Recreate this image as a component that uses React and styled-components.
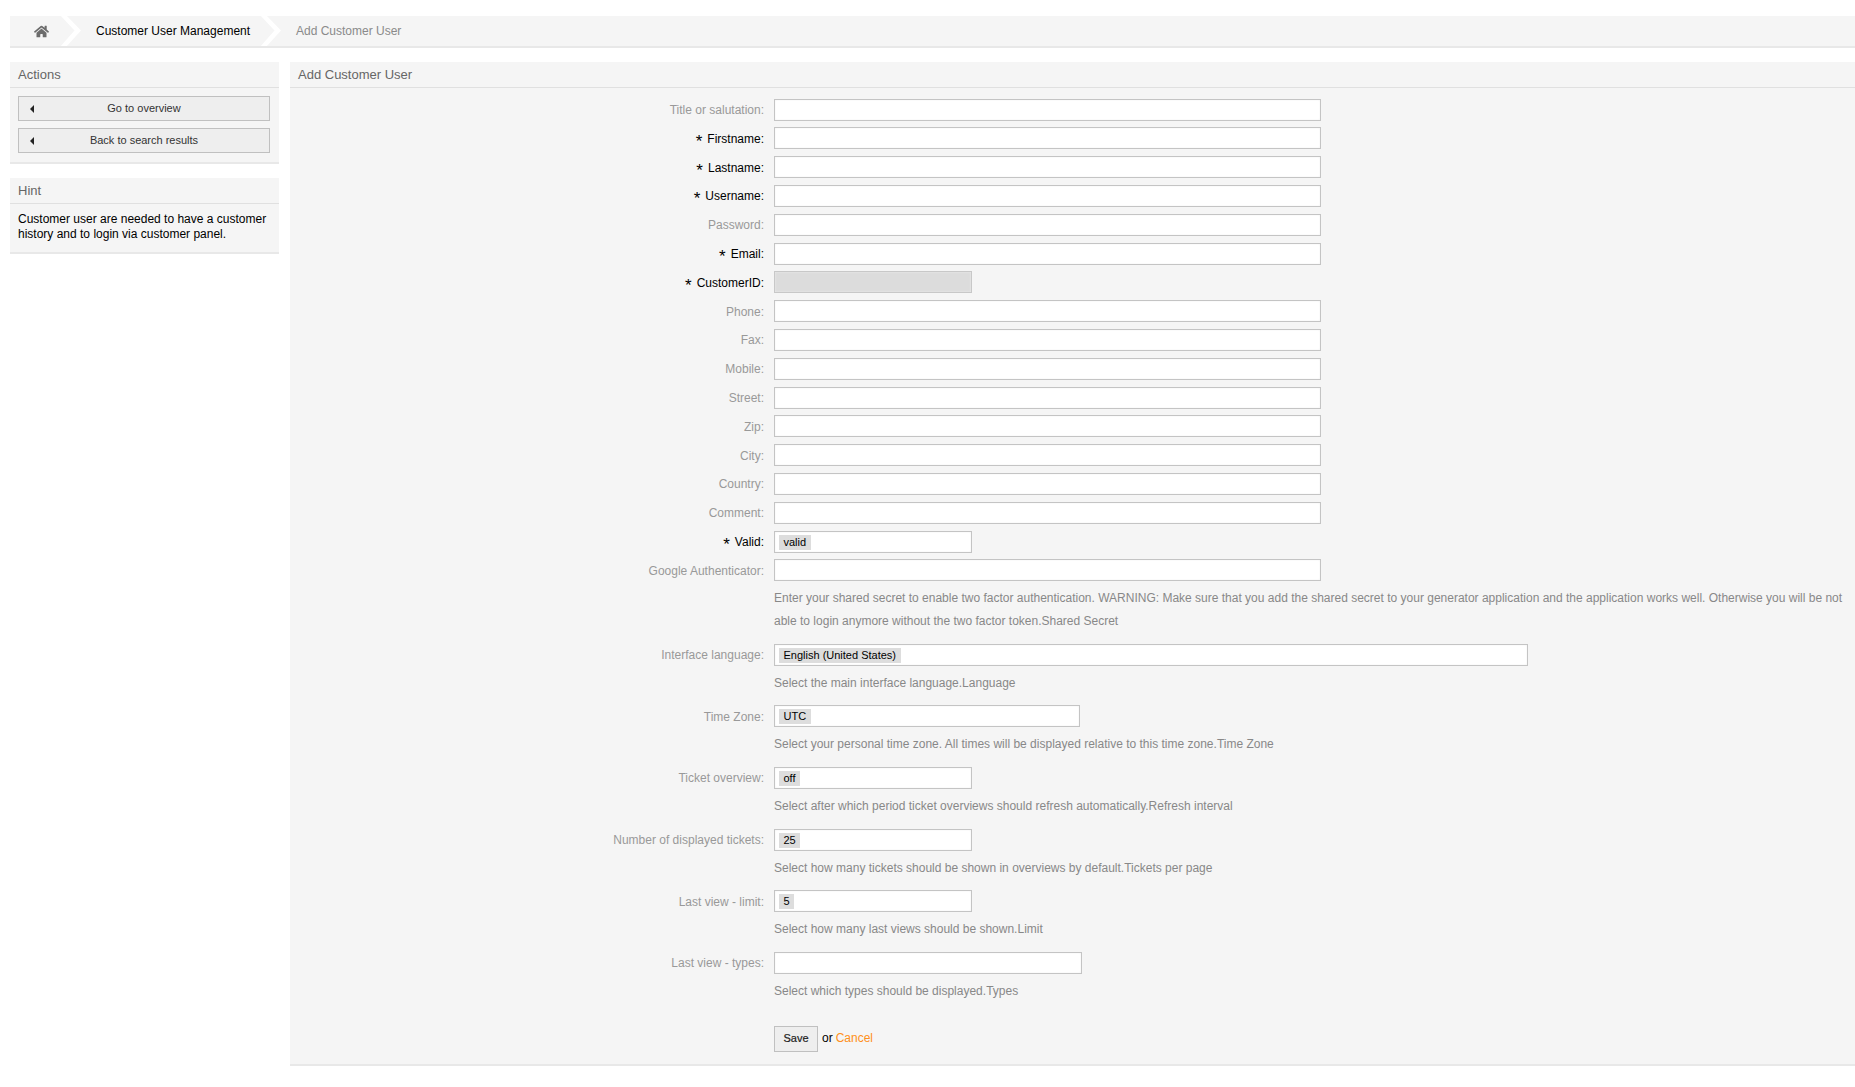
import React from "react";
import styled, { createGlobalStyle } from "styled-components";
import { FaHome } from "react-icons/fa";

const Global = createGlobalStyle`
  html, body { margin: 0; padding: 0; background: #fff; }
  body { font: 12px/15px "Liberation Sans", Arial, sans-serif; color: #000; }
  * { box-sizing: border-box; }
`;

const Page = styled.div`
  padding: 16px 0 21px 10px;
  width: 1855px;
`;

const Breadcrumb = styled.nav`
  display: flex;
  align-items: center;
  height: 32px;
  background: #f5f5f5;
  border-bottom: 2px solid #e8e8e8;
  margin-bottom: 14px;
  overflow: hidden;
`;

const Crumb = styled.span`
  display: flex;
  align-items: center;
  height: 30px;
  width: ${(p) => p.$width}px;
  padding-left: ${(p) => p.$pad}px;
  color: ${(p) => (p.$muted ? "#8a8a8a" : "#000")};
  white-space: nowrap;
  svg { color: #6c6c6c; }
`;

const Chevron = styled.svg`
  flex: none;
  display: block;
  width: 22px;
  height: 32px;
`;

const Columns = styled.div`
  display: flex;
  gap: 11px;
  align-items: flex-start;
`;

const Sidebar = styled.aside`
  flex: none;
  width: 269px;
  display: flex;
  flex-direction: column;
  gap: 14px;
`;

const Panel = styled.section`
  background: #f5f5f5;
  border-bottom: 2px solid #e8e8e8;
  flex: ${(p) => (p.$grow ? "1" : "none")};
  min-width: 0;
`;

const PanelHeader = styled.h2`
  margin: 0;
  height: 26px;
  padding-left: 8px;
  font-size: 13px;
  font-weight: normal;
  line-height: 26px;
  color: #666;
  border-bottom: 1px solid #e0e0e0;
`;

const ActionList = styled.div`
  display: flex;
  flex-direction: column;
  gap: 7px;
  padding: 8px 9px 9px 8px;
`;

const ActionButton = styled.a`
  position: relative;
  display: block;
  height: 25px;
  background: #eee;
  border: 1px solid #c0c0c0;
  color: #333;
  font-size: 11px;
  line-height: 23px;
  text-align: center;
`;

const BackArrow = styled.i`
  position: absolute;
  left: 11px;
  top: 8px;
  width: 0;
  height: 0;
  border-style: solid;
  border-width: 4px 4.5px 4px 0;
  border-color: transparent #222 transparent transparent;
`;

const HintText = styled.p`
  margin: 0;
  padding: 8px 8px 10px;
  line-height: 15px;
`;

const Form = styled.div`
  padding: 10.6px 0 12px;
`;

const Row = styled.div`
  display: grid;
  grid-template-columns: 474px 1fr;
  column-gap: 10px;
  margin-bottom: ${(p) => p.$gap ?? 6.8}px;
`;

const Label = styled.label`
  height: 22px;
  text-align: right;
  padding-top: 0.5px;
  line-height: 22px;
  color: ${(p) => (p.$required ? "#000" : "#999")};
`;

const Star = styled.span`
  font-size: 17px;
  line-height: 0;
  vertical-align: -4px;
  margin-right: 5px;
`;

const FieldCol = styled.div`
  min-width: 0;
`;

const Input = styled.input`
  display: block;
  width: ${(p) => p.$width || 547}px;
  height: 22px;
  padding: 0 4px;
  background: #fff;
  border: 1px solid #c4c4c4;
  border-radius: 0;
  box-shadow: inset 0 0 2px #eee;
  outline: none;
`;

const DisabledField = styled.div`
  width: 198px;
  height: 22px;
  background: #dcdcdc;
  border: 1px solid #c8c8c8;
  box-shadow: inset 0 0 2px #eee;
`;

const SelectField = styled.div`
  display: flex;
  align-items: flex-start;
  width: ${(p) => p.$width}px;
  height: 22px;
  padding: 3px 0 0 4px;
  background: #fff;
  border: 1px solid #c4c4c4;
  box-shadow: inset 0 0 2px #eee;
`;

const Chip = styled.span`
  height: 15px;
  padding: 0 4.5px;
  background: #ddd;
  font-size: 11px;
  line-height: 15px;
`;

const Help = styled.p`
  margin: 6px 0 0;
  line-height: 23px;
  color: #888;
`;

const ActionsRow = styled.div`
  display: flex;
  align-items: center;
  gap: 4px;
  margin: 23px 0 0 484px;
`;

const SaveButton = styled.button`
  width: 44px;
  height: 26px;
  padding: 0 0 2px;
  background: #eee;
  border: 1px solid #c0c0c0;
  border-radius: 0;
  color: #222;
  font: 11px "Liberation Sans", Arial, sans-serif;
  -webkit-text-stroke: 0.2px #222;
`;

const OrText = styled.span`
  margin-bottom: 1px;
  a { color: #ff9020; margin-left: 3px; }
`;

const topRows = [
  ["Title or salutation:"],
  ["Firstname:", true],
  ["Lastname:", true],
  ["Username:", true],
  ["Password:"],
  ["Email:", true],
  ["CustomerID:", true, "disabled"],
  ["Phone:"],
  ["Fax:"],
  ["Mobile:"],
  ["Street:"],
  ["Zip:"],
  ["City:"],
  ["Country:"],
  ["Comment:"],
];

const helpRows = [
  { label: "Interface language:", chip: "English (United States)", width: 754, help: "Select the main interface language.Language" },
  { label: "Time Zone:", chip: "UTC", width: 306, help: "Select your personal time zone. All times will be displayed relative to this time zone.Time Zone" },
  { label: "Ticket overview:", chip: "off", width: 198, help: "Select after which period ticket overviews should refresh automatically.Refresh interval" },
  { label: "Number of displayed tickets:", chip: "25", width: 198, help: "Select how many tickets should be shown in overviews by default.Tickets per page" },
  { label: "Last view - limit:", chip: "5", width: 198, help: "Select how many last views should be shown.Limit" },
  { label: "Last view - types:", width: 308, help: "Select which types should be displayed.Types" },
];

const RowLabel = ({ required, children }) => (
  <Label $required={required}>
    {required && <Star>*</Star>}
    {children}
  </Label>
);

const ChevronMark = () => (
  <Chevron viewBox="0 0 22 32" aria-hidden="true">
    <path d="M0 0 L6 0 L21 15.5 L6 32 L0 32 L14.5 15.5 Z" fill="#fff" />
  </Chevron>
);

export default function App() {
  return (
    <>
      <Global />
      <Page>
        <Breadcrumb>
          <Crumb $width={50} $pad={24}>
            <FaHome size={15} />
          </Crumb>
          <ChevronMark />
          <Crumb $width={178} $pad={14}>Customer User Management</Crumb>
          <ChevronMark />
          <Crumb $pad={14} $muted>Add Customer User</Crumb>
        </Breadcrumb>
        <Columns>
          <Sidebar>
            <Panel>
              <PanelHeader>Actions</PanelHeader>
              <ActionList>
                <ActionButton><BackArrow />Go to overview</ActionButton>
                <ActionButton><BackArrow />Back to search results</ActionButton>
              </ActionList>
            </Panel>
            <Panel>
              <PanelHeader>Hint</PanelHeader>
              <HintText>Customer user are needed to have a customer history and to login via customer panel.</HintText>
            </Panel>
          </Sidebar>
          <Panel $grow>
            <PanelHeader>Add Customer User</PanelHeader>
            <Form>
              {topRows.map(([label, required, kind]) => (
                <Row key={label}>
                  <RowLabel required={required}>{label}</RowLabel>
                  <FieldCol>{kind === "disabled" ? <DisabledField /> : <Input type="text" />}</FieldCol>
                </Row>
              ))}
              <Row>
                <RowLabel required>Valid:</RowLabel>
                <FieldCol><SelectField $width={198}><Chip>valid</Chip></SelectField></FieldCol>
              </Row>
              <Row $gap={10.4}>
                <RowLabel>Google Authenticator:</RowLabel>
                <FieldCol>
                  <Input type="text" />
                  <Help>Enter your shared secret to enable two factor authentication. WARNING: Make sure that you add the shared secret to your generator application and the application works well. Otherwise you will be not able to login anymore without the two factor token.Shared Secret</Help>
                </FieldCol>
              </Row>
              {helpRows.map((r) => (
                <Row $gap={10.6} key={r.label}>
                  <RowLabel>{r.label}</RowLabel>
                  <FieldCol>
                    <SelectField $width={r.width}>{r.chip && <Chip>{r.chip}</Chip>}</SelectField>
                    <Help>{r.help}</Help>
                  </FieldCol>
                </Row>
              ))}
              <ActionsRow>
                <SaveButton type="button">Save</SaveButton>
                <OrText>or<a>Cancel</a></OrText>
              </ActionsRow>
            </Form>
          </Panel>
        </Columns>
      </Page>
    </>
  );
}
